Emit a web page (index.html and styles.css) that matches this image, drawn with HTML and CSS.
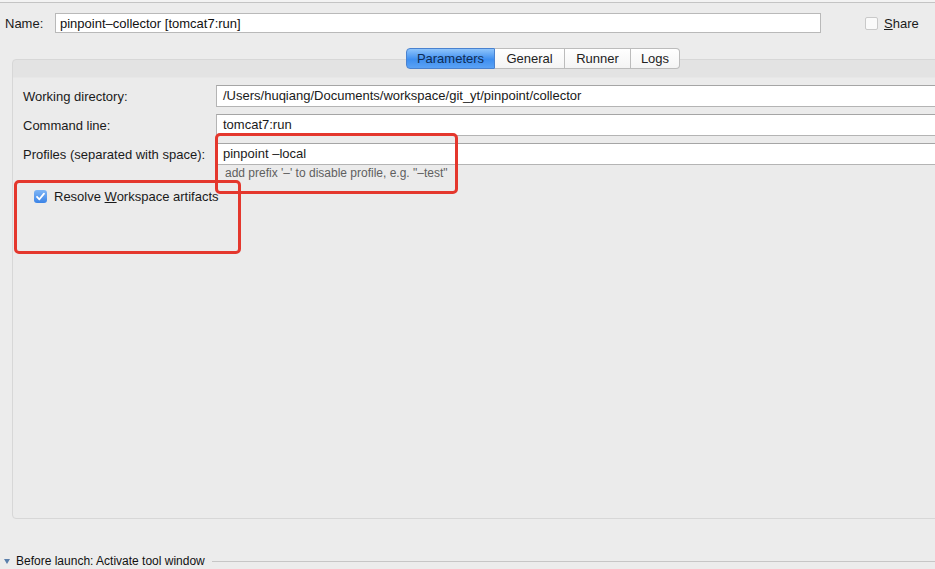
FILE: index.html
```html
<!DOCTYPE html>
<html lang="en">
<head>
    <meta charset="UTF-8">
    <title>Run Configuration - pinpoint-collector</title>
    <link rel="stylesheet" href="styles.css">
</head>
<body>

    <div class="top-edge"></div>

    <div class="name-row">
        <label class="name-label" for="config-name">Name:</label>
        <input type="text" id="config-name" class="name-input" value="pinpoint–collector [tomcat7:run]">
        <span class="share">
            <span class="box"></span>
            <span><u>S</u>hare</span>
        </span>
    </div>

    <div class="tabs">
        <span class="tab active">Parameters</span>
        <span class="tab">General</span>
        <span class="tab">Runner</span>
        <span class="tab">Logs</span>
    </div>

    <section class="panel">
        <div class="form-grid">
            <label>Working directory:</label>
            <div class="field">/Users/huqiang/Documents/workspace/git_yt/pinpoint/collector</div>

            <label>Command line:</label>
            <div class="field">tomcat7:run</div>

            <label>Profiles (separated with space):</label>
            <div class="field">pinpoint –local</div>
        </div>
        <p class="hint">add prefix '–' to disable profile, e.g. "–test"</p>

        <div class="check-row">
            <span class="check">
                <svg width="13" height="13" viewBox="0 0 13 13">
                    <path d="M3 6.8 L5.4 9.3 L10 3.6" fill="none" stroke="#fff" stroke-width="1.8" stroke-linecap="round" stroke-linejoin="round"/>
                </svg>
            </span>
            <span>Resolve <u>W</u>orkspace artifacts</span>
        </div>
    </section>

    <div class="before-launch">
        <span class="arrow"></span>
        <span class="bl-text">Before launch: Activate tool window</span>
        <span class="bl-line"></span>
    </div>

    <!-- annotations drawn over the dialog -->
    <div class="mark mark-profiles"></div>
    <div class="mark mark-resolve"></div>

</body>
</html>
```

FILE: styles.css
```css
body {
    margin: 0;
    background: #ececec;
    font-family: 'Liberation Sans', Arial, sans-serif;
    font-size: 13px;
    color: #1a1a1a;
    overflow: hidden;
    width: 935px;
    height: 569px;
    position: relative;
}

.top-edge {
    height: 2px;
    background: #f3f3f3;
    border-bottom: 1px solid #c4c4c4;
}

.name-row {
    display: flex;
    align-items: center;
    padding: 10px 0 0 5px;
    height: 20px;
}

.name-label {
    width: 50px;
}

.name-input {
    width: 766px;
    height: 20px;
    box-sizing: border-box;
    border: 1px solid #b9b9b9;
    background: #fff;
    font: inherit;
    padding: 0 4px;
    color: #111;
}

.share {
    display: flex;
    align-items: center;
    margin-left: 44px;
    gap: 6px;
}

.share .box {
    width: 13px;
    height: 13px;
    box-sizing: border-box;
    border: 1px solid #c9c9c9;
    border-radius: 2px;
    background: #fafafa;
}

.tabs {
    display: flex;
    margin: 15px 0 0 406px;
    position: relative;
    z-index: 1;
}

.tab {
    height: 21px;
    box-sizing: border-box;
    line-height: 19px;
    text-align: center;
    background: linear-gradient(#ffffff, #f4f4f4);
    border: 1px solid #bcbcbc;
    border-left: none;
    color: #222;
}

.tab:first-child {
    border-left: 1px solid #8aa9d6;
    border-radius: 4px 0 0 4px;
}

.tab:last-child {
    border-radius: 0 4px 4px 0;
}

.tab.active {
    width: 89px;
    background: linear-gradient(#8ec4fb, #3f8ff0 55%, #5aa2f5);
    border-color: #4a82cf;
    color: #0f2d55;
}

.tab:nth-child(2) { width: 70px; }
.tab:nth-child(3) { width: 66px; }
.tab:nth-child(4) { width: 49px; }

.panel {
    margin: -10px -30px 0 12px;
    height: 460px;
    box-sizing: border-box;
    border: 1px solid #d7d7d7;
    border-radius: 4px;
    padding: 25px 0 0 10px;
    background: linear-gradient(#e3e3e3, #e3e3e3 17px, #ebebeb 18px, #ebebeb);
}

.form-grid {
    display: grid;
    grid-template-columns: 193px 1fr;
    grid-auto-rows: 22px;
    row-gap: 7px;
    align-items: center;
}

.field {
    height: 22px;
    box-sizing: border-box;
    border: 1px solid #b4b4b4;
    border-top-color: #a5a5a5;
    background: #fff;
    line-height: 20px;
    padding-left: 6px;
    white-space: nowrap;
    overflow: hidden;
}

.hint {
    margin: 1px 0 0 202px;
    font-size: 12px;
    color: #5f5f5f;
    line-height: 14px;
}

.check-row {
    display: flex;
    align-items: center;
    gap: 7px;
    margin: 9px 0 0 11px;
}

.check {
    width: 13px;
    height: 13px;
    border-radius: 3px;
    background: linear-gradient(#7fb6f6, #3b83e6);
    display: flex;
}

.before-launch {
    display: flex;
    align-items: center;
    margin-top: 35px;
    padding-left: 4px;
    font-size: 12px;
    color: #111;
}

.arrow {
    width: 0;
    height: 0;
    border-left: 3px solid transparent;
    border-right: 3px solid transparent;
    border-top: 5px solid #5a7fab;
    margin-right: 6px;
}

.bl-line {
    flex: 1;
    border-top: 1px solid #c6c6c6;
    margin-left: 7px;
}

.mark {
    position: absolute;
    border: 3px solid #e4372d;
    border-radius: 5px;
    box-sizing: border-box;
}

.mark-profiles {
    left: 215px;
    top: 133px;
    width: 243px;
    height: 61px;
}

.mark-resolve {
    left: 14px;
    top: 180px;
    width: 227px;
    height: 74px;
}
```
